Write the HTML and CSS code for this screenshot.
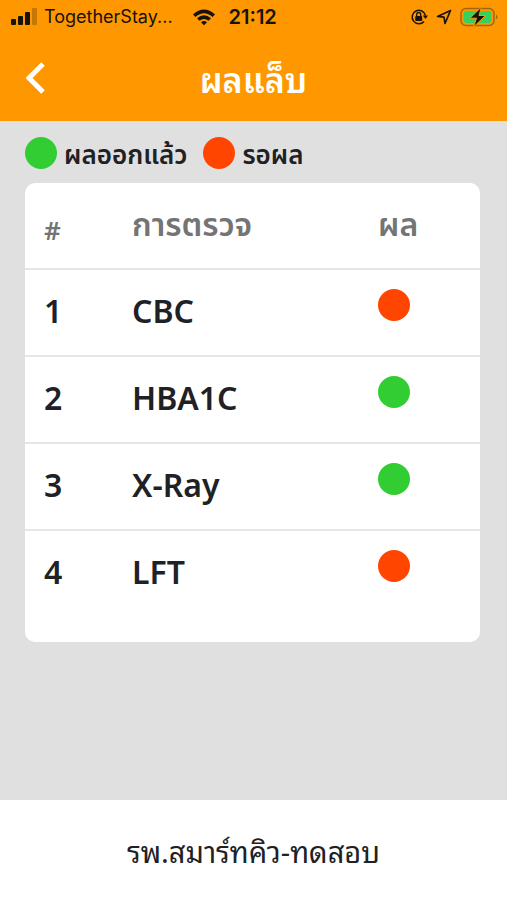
FILE: index.html
```html
<!DOCTYPE html>
<html lang="th">
<head>
<meta charset="utf-8">
<meta name="viewport" content="width=device-width, initial-scale=1">
<title>ผลแล็บ</title>
<link rel="stylesheet" href="styles.css">
</head>
<body>
<header class="top">
  <div class="status">
    <svg class="signal" viewBox="0 0 26 18" aria-hidden="true"><rect x="0" y="11" width="5" height="6" rx="1"/><rect x="7" y="8" width="5" height="9" rx="1"/><rect x="14" y="4" width="5" height="13" rx="1"/><rect x="21" y="0" width="5" height="17" rx="1" opacity=".25"/></svg>
    <span class="carrier">TogetherStay...</span>
    <svg class="wifi" viewBox="0 0 24 18" aria-hidden="true"><path d="M1 6.500Q12-3.500 23 6.500L20.500 9Q12 1.500 3.500 9ZM5 10.300Q12 4 19 10.300L16.500 12.800Q12 9 7.500 12.800ZM9 14.200Q12 11.800 15 14.200L12 17.200Z"/></svg>
    <time class="clock">21:12</time>
    <span class="indicators">
      <svg class="lock" viewBox="0 0 18 18" aria-hidden="true"><path d="M14 13.400A6.700 6.700 0 1 1 15.400 7.500" fill="none" stroke="#17120a" stroke-width="1.500"/><path d="M12.800 7.500H18L15.500 11Z"/><rect x="5.200" y="8" width="7" height="5" rx="1"/><path d="M6.700 8V6.500a2 2 0 0 1 4 0V8" fill="none" stroke="#17120a" stroke-width="1.300"/></svg>
      <svg class="arrow" viewBox="0 0 16 16" aria-hidden="true"><path d="M14.500 1.500L1.500 7.500L8 8.200L9 14.500Z" fill="none" stroke="#17120a" stroke-width="1.700" stroke-linejoin="round"/></svg>
      <svg class="battery" viewBox="0 0 38 20" aria-hidden="true"><rect x="1" y="1.500" width="33" height="17" rx="5" fill="none" stroke="#9c6714" stroke-width="1.500"/><rect x="3.500" y="4" width="28" height="12" rx="3" fill="#36d05f"/><path d="M36 7.500Q39 10 36 12.500Z" fill="#9c6714"/><path d="M21.500 0L10 11.200H16.500L13.500 20L25.500 8.500H19Z" stroke="#ff9800" stroke-width="1"/></svg>
    </span>
  </div>
  <nav class="bar">
    <button class="back" type="button" aria-label="กลับ"><svg viewBox="0 0 20 32" aria-hidden="true"><path d="M17 2L3 16L17 30"/></svg></button>
    <h1>ผลแล็บ</h1>
  </nav>
</header>
<main>
  <div class="legend">
    <span class="key"><i class="dot ready"></i>ผลออกแล้ว</span>
    <span class="key"><i class="dot waiting"></i>รอผล</span>
  </div>
  <section class="card">
    <table>
      <thead><tr><th class="num">#</th><th>การตรวจ</th><th class="result">ผล</th></tr></thead>
      <tbody>
        <tr><td class="num">1</td><td>CBC</td><td class="result"><i class="dot waiting" role="img" aria-label="รอผล"></i></td></tr>
        <tr><td class="num">2</td><td>HBA1C</td><td class="result"><i class="dot ready" role="img" aria-label="ผลออกแล้ว"></i></td></tr>
        <tr><td class="num">3</td><td>X-Ray</td><td class="result"><i class="dot ready" role="img" aria-label="ผลออกแล้ว"></i></td></tr>
        <tr><td class="num">4</td><td>LFT</td><td class="result"><i class="dot waiting" role="img" aria-label="รอผล"></i></td></tr>
      </tbody>
    </table>
  </section>
</main>
<footer>รพ.สมาร์ทคิว-ทดสอบ</footer>
</body>
</html>
```

FILE: styles.css
```css
* { box-sizing: border-box; }
body {
  margin: 0;
  min-height: 100vh;
  display: flex;
  flex-direction: column;
  background: #e0e0e0;
  color: #202124;
  font-family: "Noto Sans", "Noto Sans Thai", sans-serif;
}
.top { background: #ff9800; }
.status {
  display: flex;
  align-items: center;
  height: 34px;
  padding: 0 9px 0 11px;
  color: #17120a;
  font: 18px/34px Inter, sans-serif;
}
.status svg { fill: #17120a; flex: none; }
.signal { width: 26px; height: 18px; }
.carrier { margin-left: 7px; }
.wifi { width: 24px; height: 18px; margin-left: 19px; }
.clock { margin-left: 13px; font-size: 20px; font-weight: 600; }
.indicators { display: flex; align-items: center; gap: 8px; margin-left: auto; }
.lock { width: 18px; height: 18px; }
.arrow { width: 16px; height: 16px; }
.battery { width: 38px; height: 20px; }
.bar {
  display: grid;
  grid-template-columns: 72px 1fr 72px;
  align-items: center;
  height: 87px;
}
.back { justify-self: center; width: 36px; height: 48px; padding: 8px; border: 0; background: none; }
.back svg { display: block; width: 20px; height: 32px; fill: none; stroke: #fff; stroke-width: 5; }
h1 { margin: 0; color: #fff; text-align: center; font-family: "Noto Looped Thai", "Noto Sans Thai Looped", Loma, Waree, "Noto Sans", sans-serif; font-size: 34px; line-height: 46px; font-weight: 600; }
main { flex: 1; padding: 12px 27px 24px 25px; }
.legend { display: flex; gap: 16px; height: 50px; font-size: 26px; line-height: 42px; font-weight: 600; }
.key { display: flex; gap: 7px; }
.dot { display: block; flex: none; width: 32px; height: 32px; border-radius: 50%; }
.key .dot { margin-top: 4px; }
.ready { background: #32cd32; }
.waiting { background: #ff4500; }
.card { background: #fff; border-radius: 10px; padding-bottom: 25px; }
table { width: 100%; border-collapse: collapse; table-layout: fixed; }
th, td { height: 87px; padding: 0 0 4px; text-align: left; font-size: 32px; line-height: 40px; font-weight: 600; }
td { border-top: 2px solid #e6e6e6; }
th { height: 86px; color: #747474; }
.num { width: 107px; padding-left: 19px; }
th.num { padding: 8px 0 0 19px; font-size: 26px; }
.result { width: 102px; }
td.result { padding: 19px 0 0; vertical-align: top; }
footer { height: 100px; background: #fff; text-align: center; font-family: "Noto Looped Thai", "Noto Sans Thai Looped", Loma, Waree, "Noto Sans", sans-serif; font-size: 29px; line-height: 100px; }
```
